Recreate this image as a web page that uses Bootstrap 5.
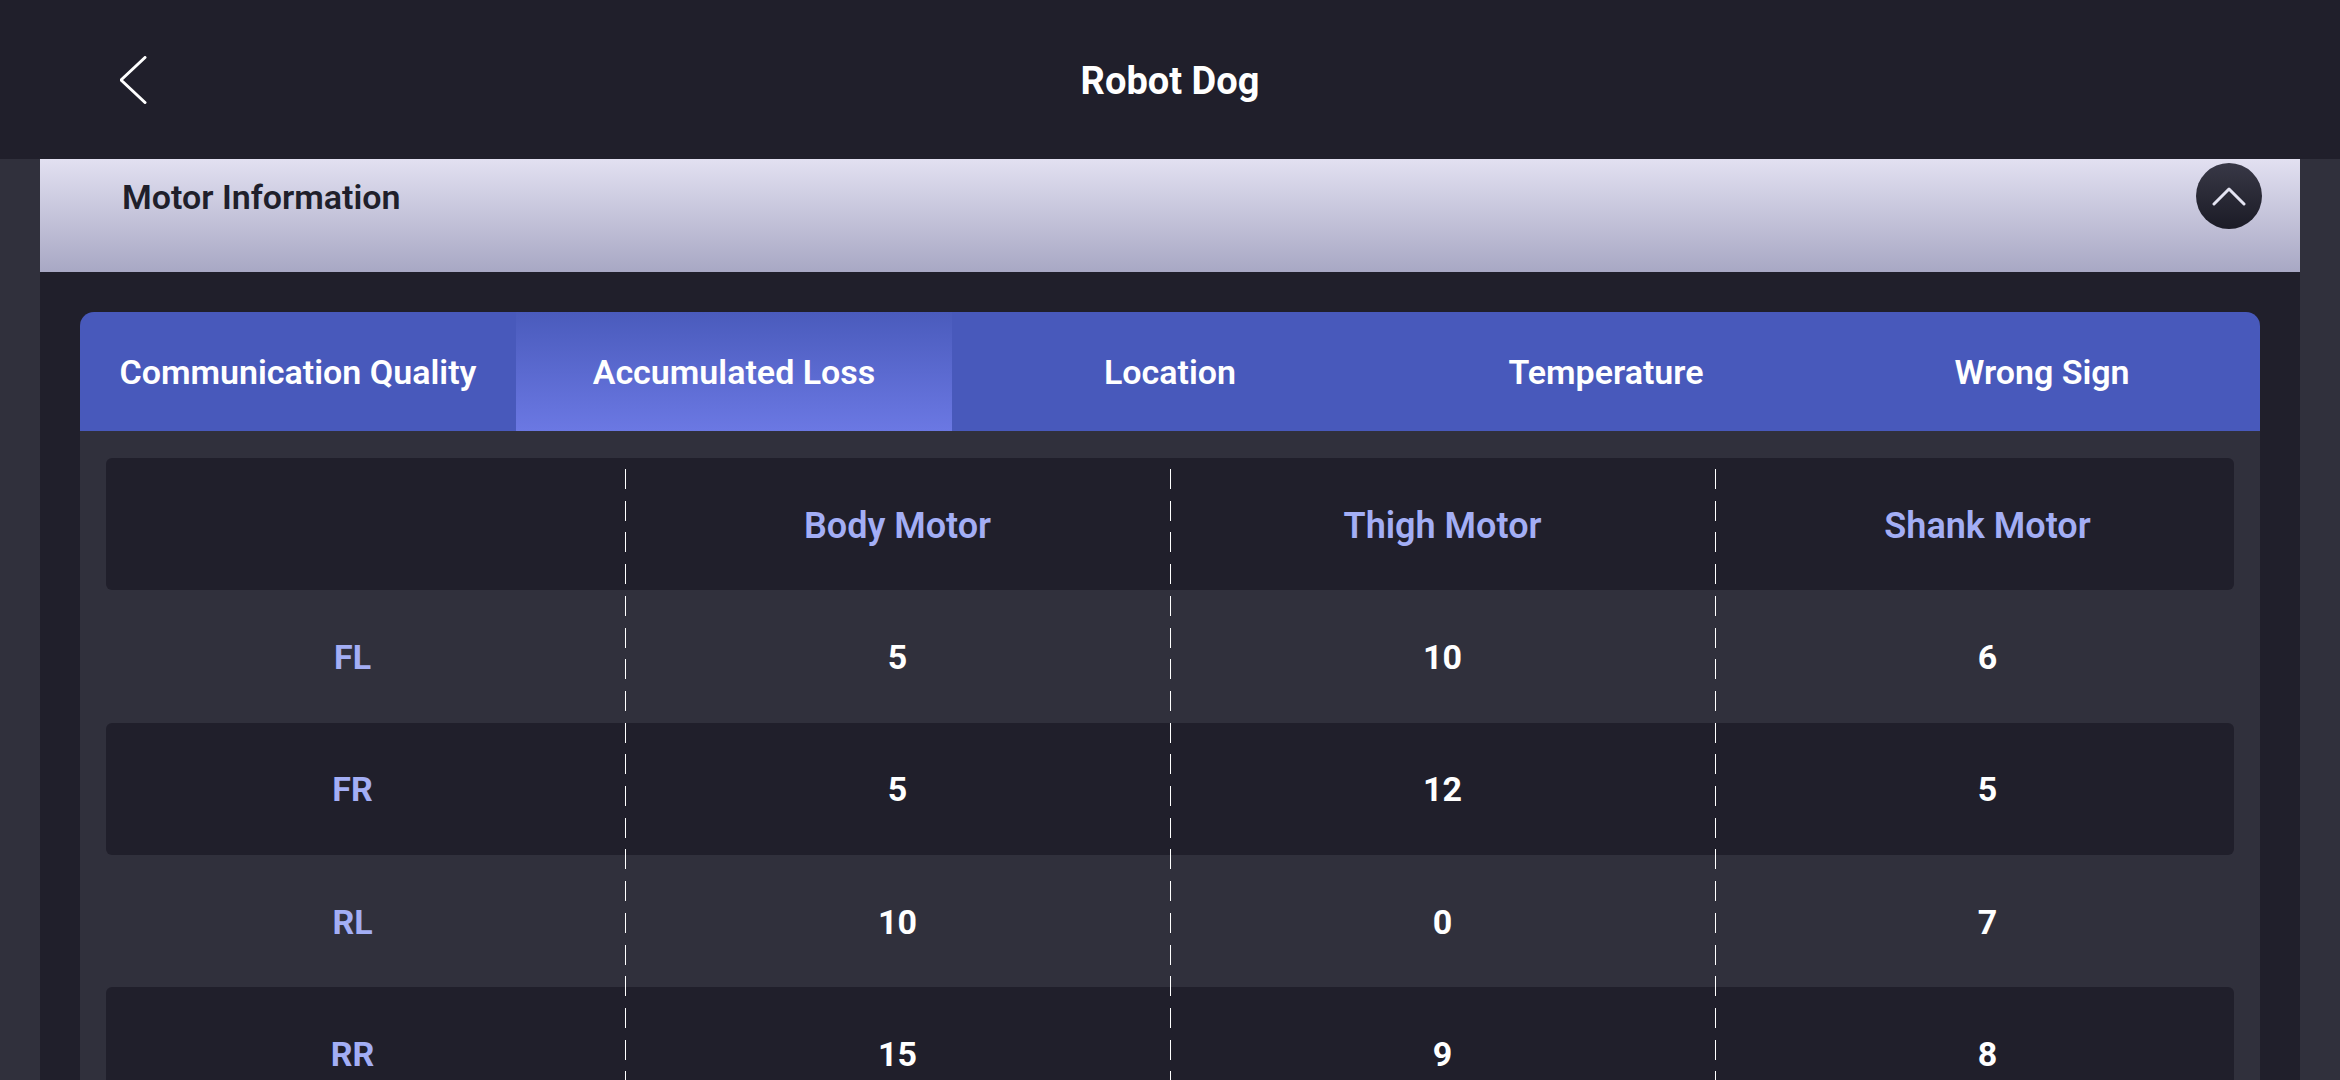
<!DOCTYPE html>
<html lang="en">
<head>
    <meta charset="UTF-8">
    <meta name="viewport" content="width=device-width, initial-scale=1.0">
    <title>Robot Dog</title>
    <link href="https://cdn.jsdelivr.net/npm/bootstrap@5.3.0/dist/css/bootstrap.min.css" rel="stylesheet">
    <style>
        body {
            background: #30303c;
            font-family: Roboto, "Liberation Sans", sans-serif;
            height: 100vh;
            overflow: hidden;
        }
        .top-bar {
            height: 159px;
            background: #201f2b;
            padding: 0 120px;
        }
        .top-side {
            flex: 1;
        }
        .top-title {
            font-size: 38px;
            font-weight: 700;
            color: #fff;
            margin: 4px 0 0;
        }
        .back-icon {
            display: block;
        }
        .sheet {
            margin: 0 40px;
            background: #201f2b;
            height: 921px;
            overflow: hidden;
        }
        .motor-head {
            height: 113px;
            padding: 20px 38px 0 82px;
            background: linear-gradient(to bottom, #e2e0f1, #a8a8c4);
        }
        .motor-title {
            font-size: 34px;
            font-weight: 600;
            line-height: 36px;
            color: #201f2b;
            margin: 0;
        }
        .fold-btn {
            width: 66px;
            height: 66px;
            margin-top: -16px;
            border-radius: 50%;
            border: 0;
            padding: 0;
            background: linear-gradient(to bottom, #383846, #1b1b26);
        }
        .motor-body {
            padding: 40px 40px 0;
        }
        .tab-strip {
            height: 119px;
            background: #4859bb;
            border-radius: 14px 14px 0 0;
            overflow: hidden;
        }
        .tab-strip .nav-link {
            height: 119px;
            padding: 2px 0 0;
            border-radius: 0;
            font-size: 34px;
            font-weight: 600;
            color: #fff;
        }
        .tab-strip .nav-link.active {
            background: linear-gradient(to bottom, #4a5bbc, #6b78e3);
            color: #fff;
        }
        .grid-wrap {
            background: #30303c;
            padding: 27px 26px 0;
            height: 720px;
        }
        .grid-line {
            display: grid;
            grid-template-columns: 519px 545px 545px 519px;
            height: 132.3px;
            padding-top: 2px;
            font-size: 34px;
            font-weight: 700;
            color: #fff;
        }
        .grid-line.shaded {
            background: #201f2b;
            border-radius: 6px;
        }
        .grid-line > div:first-child {
            padding-right: 26px;
        }
        .grid-line > div:last-child {
            padding-left: 26px;
        }
        .lilac {
            color: #a3aef5;
        }
        .grid-line.head-line {
            padding-top: 4px;
        }
        .head-line > div {
            font-weight: 600;
            font-size: 36px;
        }
        .dash-layer {
            top: 38px;
            pointer-events: none;
        }
        .dash-col {
            flex: 0 0 25%;
        }
        .dash-col + .dash-col {
            background: repeating-linear-gradient(to bottom, #fff 0, #fff 20px, transparent 20px, transparent 31.7px) left top / 1px 100% no-repeat;
        }
    </style>
</head>
<body>
    <!-- Header -->
    <div class="top-bar d-flex align-items-center">
        <div class="top-side">
            <svg class="back-icon" width="27" height="48" viewBox="0 0 27 48" fill="none">
                <path d="M25 1.5 L1 24 L25 46.5" stroke="#fff" stroke-width="3" stroke-linecap="round" stroke-linejoin="round"/>
            </svg>
        </div>
        <h1 class="top-title">Robot Dog</h1>
        <div class="top-side"></div>
    </div>

    <div class="sheet">
        <div class="motor-head d-flex justify-content-between align-items-start">
            <h2 class="motor-title">Motor Information</h2>
            <button class="fold-btn d-flex align-items-center justify-content-center" type="button" aria-label="Collapse">
                <svg width="34" height="20" viewBox="0 0 34 20" fill="none">
                    <path d="M2 18 L17 3 L32 18" stroke="#e4e4f2" stroke-width="3" stroke-linecap="round" stroke-linejoin="round"/>
                </svg>
            </button>
        </div>

        <div class="motor-body">
            <!-- Tabs -->
            <ul class="nav nav-justified tab-strip">
                <li class="nav-item"><a class="nav-link d-flex align-items-center justify-content-center" href="#">Communication Quality</a></li>
                <li class="nav-item"><a class="nav-link active d-flex align-items-center justify-content-center" href="#">Accumulated Loss</a></li>
                <li class="nav-item"><a class="nav-link d-flex align-items-center justify-content-center" href="#">Location</a></li>
                <li class="nav-item"><a class="nav-link d-flex align-items-center justify-content-center" href="#">Temperature</a></li>
                <li class="nav-item"><a class="nav-link d-flex align-items-center justify-content-center" href="#">Wrong Sign</a></li>
            </ul>

            <!-- Table -->
            <div class="position-relative">
                <div class="grid-wrap">
                    <div class="grid-line head-line shaded">
                        <div></div>
                        <div class="lilac d-flex align-items-center justify-content-center">Body Motor</div>
                        <div class="lilac d-flex align-items-center justify-content-center">Thigh Motor</div>
                        <div class="lilac d-flex align-items-center justify-content-center">Shank Motor</div>
                    </div>
                    <div class="grid-line">
                        <div class="lilac d-flex align-items-center justify-content-center">FL</div>
                        <div class="d-flex align-items-center justify-content-center">5</div>
                        <div class="d-flex align-items-center justify-content-center">10</div>
                        <div class="d-flex align-items-center justify-content-center">6</div>
                    </div>
                    <div class="grid-line shaded">
                        <div class="lilac d-flex align-items-center justify-content-center">FR</div>
                        <div class="d-flex align-items-center justify-content-center">5</div>
                        <div class="d-flex align-items-center justify-content-center">12</div>
                        <div class="d-flex align-items-center justify-content-center">5</div>
                    </div>
                    <div class="grid-line">
                        <div class="lilac d-flex align-items-center justify-content-center">RL</div>
                        <div class="d-flex align-items-center justify-content-center">10</div>
                        <div class="d-flex align-items-center justify-content-center">0</div>
                        <div class="d-flex align-items-center justify-content-center">7</div>
                    </div>
                    <div class="grid-line shaded">
                        <div class="lilac d-flex align-items-center justify-content-center">RR</div>
                        <div class="d-flex align-items-center justify-content-center">15</div>
                        <div class="d-flex align-items-center justify-content-center">9</div>
                        <div class="d-flex align-items-center justify-content-center">8</div>
                    </div>
                </div>
                <div class="dash-layer position-absolute start-0 end-0 bottom-0 d-flex">
                    <div class="dash-col"></div>
                    <div class="dash-col"></div>
                    <div class="dash-col"></div>
                    <div class="dash-col"></div>
                </div>
            </div>
        </div>
    </div>

    <script src="https://cdn.jsdelivr.net/npm/bootstrap@5.3.0/dist/js/bootstrap.bundle.min.js"></script>
</body>
</html>
